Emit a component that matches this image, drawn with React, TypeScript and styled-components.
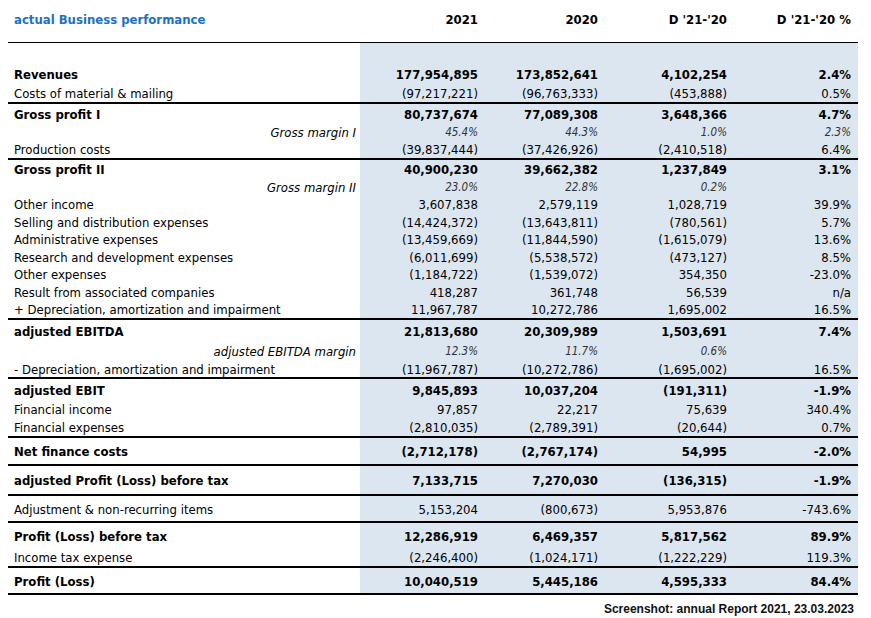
import React from "react";
import styled, { createGlobalStyle } from "styled-components";

const GlobalStyle = createGlobalStyle`
  html, body { margin: 0; padding: 0; background: #ffffff; }
  body { width: 871px; height: 618px; overflow: hidden; }
`;

const FONT = `"DejaVu Sans Condensed", "DejaVu Sans", Verdana, sans-serif`;
const COLS = "352px 120px 120px 129px 129px";
const PADS = [2, 2, 2, 7];

const Page = styled.div`
  width: 850px;
  margin-left: 8px;
  font-family: ${FONT};
  font-stretch: condensed;
  color: #000;
`;

const HeaderRow = styled.div`
  display: grid;
  grid-template-columns: ${COLS};
  height: 42px;
  align-items: start;
`;

const Title = styled.div`
  padding: 12px 0 0 6px;
  font-size: 13px;
  line-height: 16px;
  font-weight: bold;
  color: #1c72be;
`;

const HeadCell = styled.div<{ $pr: number }>`
  padding: 12px ${(p) => p.$pr}px 0 0;
  font-size: 13px;
  line-height: 16px;
  font-weight: bold;
  text-align: right;
`;

const Table = styled.div`
  display: flex;
  flex-direction: column;
  border-top: 1px solid #000;
  border-bottom: 2px solid #000;
`;

type Kind = "normal" | "bold" | "margin" | "spacer";

const Row = styled.div<{ $h: number; $line?: boolean }>`
  display: grid;
  grid-template-columns: ${COLS};
  height: ${(p) => p.$h}px;
  box-sizing: content-box;
  border-top: ${(p) => (p.$line ? "2px solid #000" : "none")};
`;

const Label = styled.div<{ $kind: Kind }>`
  display: flex;
  align-items: center;
  justify-content: ${(p) => (p.$kind === "margin" ? "flex-end" : "flex-start")};
  padding: ${(p) => (p.$kind === "margin" ? "1px 4px 0 0" : "1px 0 0 6px")};
  font-size: 13px;
  font-weight: ${(p) => (p.$kind === "bold" ? "bold" : "normal")};
  font-style: ${(p) => (p.$kind === "margin" ? "italic" : "normal")};
  white-space: nowrap;
`;

const Num = styled.div<{ $kind: Kind; $pr: number }>`
  display: flex;
  align-items: center;
  justify-content: flex-end;
  padding-top: 1px;
  padding-right: ${(p) => p.$pr}px;
  background: #dce6f1;
  font-size: ${(p) => (p.$kind === "margin" ? "11.5px" : "13px")};
  font-weight: ${(p) => (p.$kind === "bold" ? "bold" : "normal")};
  font-style: ${(p) => (p.$kind === "margin" ? "italic" : "normal")};
  color: ${(p) => (p.$kind === "margin" ? "#333" : "#000")};
  white-space: nowrap;
`;

const Caption = styled.div`
  padding: 7px 4px 0 0;
  text-align: right;
  font-family: "Liberation Sans", Arial, sans-serif;
  font-weight: bold;
  font-size: 12px;
  color: #111;
`;

type R = { label: string; v: string[]; kind: Kind; h: number; line?: boolean };

const rows: R[] = [
  { label: "", v: ["", "", "", ""], kind: "spacer", h: 20 },
  { label: "Revenues", v: ["177,954,895", "173,852,641", "4,102,254", "2.4%"], kind: "bold", h: 21 },
  { label: "Costs of material & mailing", v: ["(97,217,221)", "(96,763,333)", "(453,888)", "0.5%"], kind: "normal", h: 18 },
  { label: "Gross profit I", v: ["80,737,674", "77,089,308", "3,648,366", "4.7%"], kind: "bold", h: 19, line: true },
  { label: "Gross margin I", v: ["45.4%", "44.3%", "1.0%", "2.3%"], kind: "margin", h: 17 },
  { label: "Production costs", v: ["(39,837,444)", "(37,426,926)", "(2,410,518)", "6.4%"], kind: "normal", h: 18 },
  { label: "Gross profit II", v: ["40,900,230", "39,662,382", "1,237,849", "3.1%"], kind: "bold", h: 18, line: true },
  { label: "Gross margin II", v: ["23.0%", "22.8%", "0.2%", ""], kind: "margin", h: 17 },
  { label: "Other income", v: ["3,607,838", "2,579,119", "1,028,719", "39.9%"], kind: "normal", h: 18 },
  { label: "Selling and distribution expenses", v: ["(14,424,372)", "(13,643,811)", "(780,561)", "5.7%"], kind: "normal", h: 17 },
  { label: "Administrative expenses", v: ["(13,459,669)", "(11,844,590)", "(1,615,079)", "13.6%"], kind: "normal", h: 18 },
  { label: "Research and development expenses", v: ["(6,011,699)", "(5,538,572)", "(473,127)", "8.5%"], kind: "normal", h: 17 },
  { label: "Other expenses", v: ["(1,184,722)", "(1,539,072)", "354,350", "-23.0%"], kind: "normal", h: 18 },
  { label: "Result from associated companies", v: ["418,287", "361,748", "56,539", "n/a"], kind: "normal", h: 17 },
  { label: "+ Depreciation, amortization and impairment", v: ["11,967,787", "10,272,786", "1,695,002", "16.5%"], kind: "normal", h: 18 },
  { label: "adjusted EBITDA", v: ["21,813,680", "20,309,989", "1,503,691", "7.4%"], kind: "bold", h: 21, line: true },
  { label: "adjusted EBITDA margin", v: ["12.3%", "11.7%", "0.6%", ""], kind: "margin", h: 19 },
  { label: "- Depreciation, amortization and impairment", v: ["(11,967,787)", "(10,272,786)", "(1,695,002)", "16.5%"], kind: "normal", h: 17 },
  { label: "adjusted EBIT", v: ["9,845,893", "10,037,204", "(191,311)", "-1.9%"], kind: "bold", h: 21, line: true },
  { label: "Financial income", v: ["97,857", "22,217", "75,639", "340.4%"], kind: "normal", h: 18 },
  { label: "Financial expenses", v: ["(2,810,035)", "(2,789,391)", "(20,644)", "0.7%"], kind: "normal", h: 18 },
  { label: "Net finance costs", v: ["(2,712,178)", "(2,767,174)", "54,995", "-2.0%"], kind: "bold", h: 26, line: true },
  { label: "adjusted Profit (Loss) before tax", v: ["7,133,715", "7,270,030", "(136,315)", "-1.9%"], kind: "bold", h: 28, line: true },
  { label: "Adjustment & non-recurring items", v: ["5,153,204", "(800,673)", "5,953,876", "-743.6%"], kind: "normal", h: 25, line: true },
  { label: "Profit (Loss) before tax", v: ["12,286,919", "6,469,357", "5,817,562", "89.9%"], kind: "bold", h: 25, line: true },
  { label: "Income tax expense", v: ["(2,246,400)", "(1,024,171)", "(1,222,229)", "119.3%"], kind: "normal", h: 18 },
  { label: "Profit (Loss)", v: ["10,040,519", "5,445,186", "4,595,333", "84.4%"], kind: "bold", h: 25, line: true },
];

const headers = ["2021", "2020", "D '21-'20", "D '21-'20 %"];

export default function App() {
  return (
    <>
      <GlobalStyle />
      <Page>
        <HeaderRow>
          <Title>actual Business performance</Title>
          {headers.map((h, i) => (
            <HeadCell key={h} $pr={PADS[i]}>
              {h}
            </HeadCell>
          ))}
        </HeaderRow>
        <Table>
          {rows.map((r, idx) => (
            <Row key={idx} $h={r.h} $line={r.line}>
              <Label $kind={r.kind}>{r.label}</Label>
              {r.v.map((val, i) => (
                <Num key={i} $kind={r.kind} $pr={PADS[i]}>
                  {val}
                </Num>
              ))}
            </Row>
          ))}
        </Table>
        <Caption>Screenshot: annual Report 2021, 23.03.2023</Caption>
      </Page>
    </>
  );
}
